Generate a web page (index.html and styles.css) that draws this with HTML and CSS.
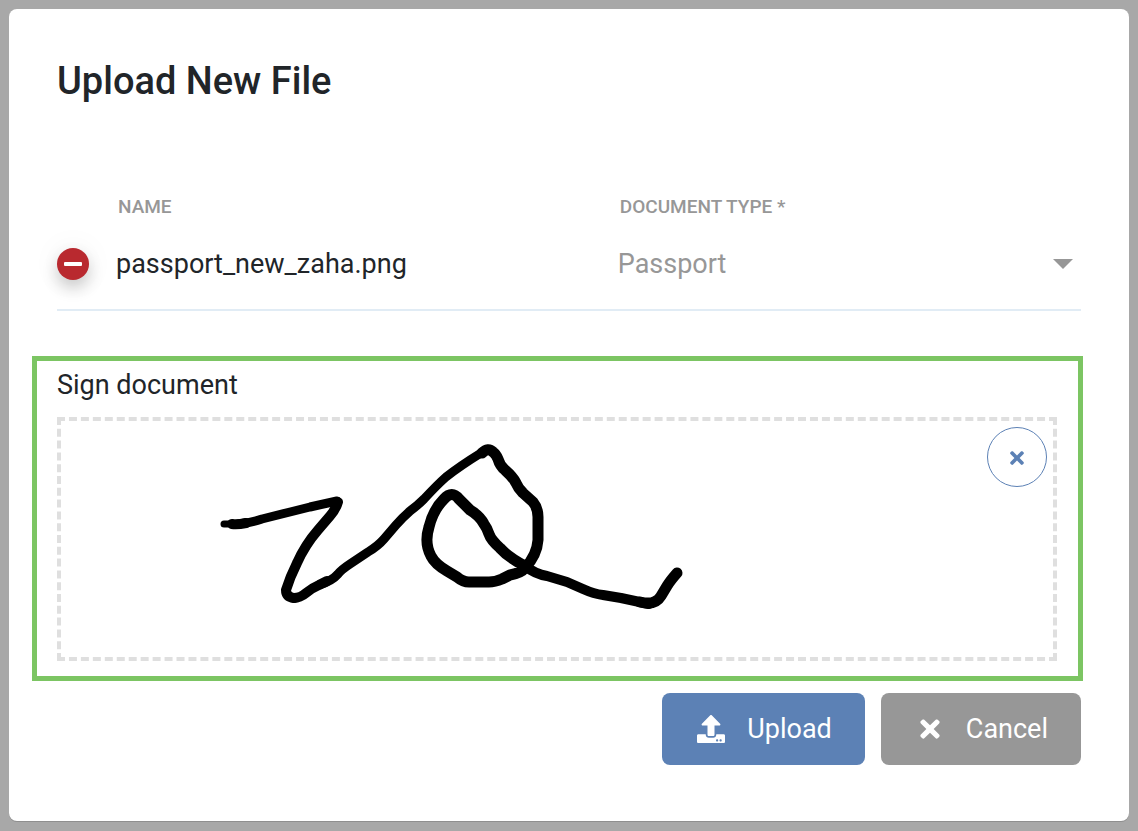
FILE: index.html
```html
<!DOCTYPE html>
<html lang="en">
<head>
<meta charset="utf-8">
<meta name="viewport" content="width=device-width, initial-scale=1">
<title>Upload New File</title>
<link rel="stylesheet" href="styles.css">
</head>
<body class="page">
<main class="modal" role="dialog" aria-labelledby="modal-title">
  <h1 class="modal-title" id="modal-title">Upload New File</h1>
  <table class="files">
    <thead>
      <tr>
        <th class="col-remove"></th>
        <th class="col-name">Name</th>
        <th class="col-type"><label for="doc-type">Document Type *</label></th>
      </tr>
    </thead>
    <tbody>
      <tr>
        <td>
          <button class="remove" type="button" aria-label="Remove file">
            <svg class="remove-icon" viewBox="0 0 18 4" aria-hidden="true"><rect width="18" height="4" rx="1"/></svg>
          </button>
        </td>
        <td class="file-name">passport_new_zaha.png</td>
        <td>
          <div class="select-wrap">
            <select class="select" id="doc-type"><option>Passport</option></select>
            <svg class="caret" viewBox="0 0 20 10" aria-hidden="true"><path d="M0 0h20L10 10z"/></svg>
          </div>
        </td>
      </tr>
    </tbody>
  </table>
  <section class="sign" aria-labelledby="sign-title">
    <h2 class="sign-title" id="sign-title">Sign document</h2>
    <div class="pad">
      <svg class="signature" viewBox="0 0 480 180" role="img" aria-label="Signature">
        <g transform="translate(-210 -435)">
          <path stroke-width="7" d="M224 524H237"/>
          <path stroke-width="10" d="M232 524Q237 525 246 523"/>
          <path stroke-width="9" d="M238 524Q250 523 262 519L290 512L310 507L337 501"/>
          <path stroke-width="10" d="M338 502Q336 509 330 516L318 530Q305 545 297 563Q290 577 286 590Q286 597 294 598"/>
          <path stroke-width="10" d="M294 598Q300 598 306 593Q312 588 319 585L327 581"/>
          <path stroke-width="9" d="M319 585Q332 581 338 574Q341 570 350 564L368 552Q378 546 384 539L396 525Q402 518 410 511Q417 506 424 499Q437 485 446 477Q460 466 481 453"/>
          <path stroke-width="11" d="M482 453Q488 447 493 452Q496 454 498 459Q500 466 505 470Q513 477 516 483Q518 488 523 493L533 502Q538 508 538 517V540Q537 555 525 568Q521 573 510 575L502 579Q495 582 489 582H469Q463 582 457 577L447 571Q435 564 431 556Q424 543 429 527Q433 510 444 499Q452 490 459 499L470 510Q480 516 484 524Q487 528 489 534Q491 540 500 548Q508 557 525 566"/>
          <path stroke-width="10" d="M525 566Q535 574 547 576L567 582L583 589Q594 594 603 595L621 598L649 604"/>
          <path stroke-width="11" d="M640 602Q655 606 661 596L667 586Q670 581 677 573"/>
        </g>
      </svg>
      <button class="clear" type="button" aria-label="Clear signature">
        <svg class="clear-icon" viewBox="0 0 352 512" aria-hidden="true"><path d="M242.72 256l100.07-100.07c12.28-12.28 12.28-32.19 0-44.48l-22.24-22.24c-12.28-12.28-32.19-12.28-44.48 0L176 189.28 75.93 89.21c-12.28-12.28-32.19-12.28-44.48 0L9.21 111.45c-12.28 12.28-12.28 32.19 0 44.48L109.28 256 9.21 356.07c-12.28 12.28-12.28 32.19 0 44.48l22.24 22.24c12.28 12.28 32.2 12.28 44.48 0L176 322.72l100.07 100.07c12.28 12.28 32.2 12.28 44.48 0l22.24-22.24c12.28-12.28 12.28-32.19 0-44.48L242.72 256z"/></svg>
      </button>
    </div>
  </section>
  <div class="actions">
    <button class="btn btn-primary" type="button">
      <svg class="btn-icon" viewBox="0 0 512 512" aria-hidden="true"><path d="M296 384h-80c-13.3 0-24-10.7-24-24V192h-87.7c-17.8 0-26.7-21.5-14.1-34.1L242.3 5.7c7.5-7.5 19.8-7.5 27.3 0l152.2 152.2c12.6 12.6 3.7 34.1-14.1 34.1H320v168c0 13.3-10.7 24-24 24zm216-8v112c0 13.3-10.7 24-24 24H24c-13.3 0-24-10.7-24-24V376c0-13.3 10.7-24 24-24h136v8c0 30.9 25.1 56 56 56h80c30.9 0 56-25.1 56-56v-8h136c13.3 0 24 10.7 24 24zm-124 88c0-11-9-20-20-20s-20 9-20 20 9 20 20 20 20-9 20-20zm64 0c0-11-9-20-20-20s-20 9-20 20 9 20 20 20 20-9 20-20z"/></svg>
      <span>Upload</span>
    </button>
    <button class="btn btn-muted" type="button">
      <svg class="btn-icon" viewBox="0 0 352 512" aria-hidden="true"><path d="M242.72 256l100.07-100.07c12.28-12.28 12.28-32.19 0-44.48l-22.24-22.24c-12.28-12.28-32.19-12.28-44.48 0L176 189.28 75.93 89.21c-12.28-12.28-32.19-12.28-44.48 0L9.21 111.45c-12.28 12.28-12.28 32.19 0 44.48L109.28 256 9.21 356.07c-12.28 12.28-12.28 32.19 0 44.48l22.24 22.24c12.28 12.28 32.2 12.28 44.48 0L176 322.72l100.07 100.07c12.28 12.28 32.2 12.28 44.48 0l22.24-22.24c12.28-12.28 12.28-32.19 0-44.48L242.72 256z"/></svg>
      <span>Cancel</span>
    </button>
  </div>
</main>
</body>
</html>
```
FILE: styles.css
```css
* {
  box-sizing: border-box;
}

.page {
  margin: 0;
  padding: 9px;
  background: #a8a8a8;
  color: #212529;
  font: 400 27px/40px Roboto, "Liberation Sans", sans-serif;
}

.modal {
  padding: 48px 48px 56px;
  border-radius: 8px;
  background: #fff;
  box-shadow: 0 1px 0 #8f8f8f;
}

.modal-title {
  margin: 0 0 90px;
  font-size: 38px;
  font-weight: 500;
  line-height: 48px;
}

.files {
  width: 100%;
  border-collapse: collapse;
  border-bottom: 2px solid #e1ecf5;
  table-layout: fixed;
}

.files th {
  padding: 0 0 0 2px;
  color: #979797;
  font-size: 19px;
  font-weight: 500;
  line-height: 24px;
  text-align: left;
  text-transform: uppercase;
}

.files td {
  height: 91px;
  padding: 0;
}

.col-remove {
  width: 59px;
}

.col-name {
  width: 49%;
}

.remove {
  display: flex;
  align-items: center;
  justify-content: center;
  width: 32px;
  height: 32px;
  padding: 0;
  border: 0;
  border-radius: 50%;
  background: #b9292f;
  box-shadow: 0 8px 16px rgba(0, 0, 0, 0.2), 0 0 32px rgba(0, 0, 0, 0.06);
}

.remove-icon {
  width: 18px;
  height: 4px;
  fill: #fff;
}

.select-wrap {
  display: grid;
  align-items: center;
}

.select {
  grid-area: 1 / 1;
  width: 100%;
  height: 40px;
  padding: 0;
  border: 0;
  background: transparent;
  color: #979797;
  font: inherit;
  appearance: none;
}

.caret {
  grid-area: 1 / 1;
  justify-self: end;
  width: 20px;
  height: 10px;
  margin-right: 8px;
  fill: #979797;
  pointer-events: none;
}

.sign {
  margin: 45px -2px 12px -25px;
  padding: 4px 21px 15px 20px;
  border: 5px solid #7cc563;
}

.sign-title {
  margin: 0 0 12px;
  font-size: 27px;
  font-weight: 400;
  line-height: 40px;
}

.pad {
  display: flex;
  align-items: flex-start;
  justify-content: space-between;
  height: 244px;
  padding: 6px 6px 0 149px;
  border: 4px dashed #dfdfdf;
}

.signature {
  width: 480px;
  height: 180px;
  margin-top: 8px;
  fill: none;
  stroke: #000;
  stroke-linecap: round;
  stroke-linejoin: round;
}

.clear {
  display: flex;
  align-items: center;
  justify-content: center;
  width: 60px;
  height: 60px;
  padding: 2px 0 0;
  border: 1px solid #5c81b5;
  border-radius: 50%;
  background: #fff;
}

.clear-icon {
  width: 14px;
  height: 20px;
  fill: #5c81b5;
}

.actions {
  display: flex;
  justify-content: flex-end;
  gap: 16px;
}

.btn {
  display: flex;
  align-items: center;
  gap: 22px;
  height: 72px;
  padding: 0 33px 0 35px;
  border: 0;
  border-radius: 8px;
  color: #fff;
  font: inherit;
}

.btn-primary {
  background: #5c81b5;
}

.btn-muted {
  background: #979797;
}

.btn-icon {
  width: 28px;
  height: 28px;
  fill: #fff;
}
```
